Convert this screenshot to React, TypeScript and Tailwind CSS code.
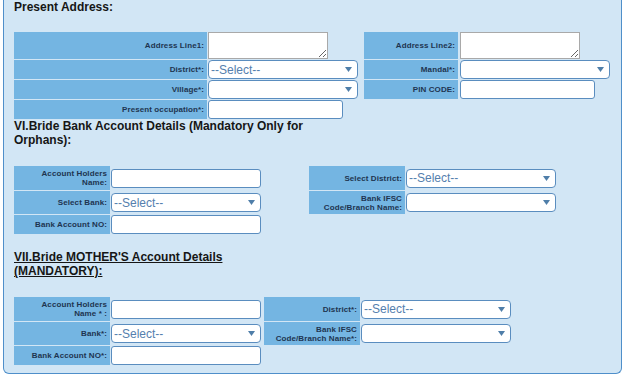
import React from 'react';

function Label({ children, className = '' }: { children: React.ReactNode; className?: string }) {
  return (
    <div
      className={`bg-[#74b5e2] flex items-center justify-end pr-[3px] text-right text-[8px] font-bold leading-[9px] tracking-[0.1px] text-[#1e3450] ${className}`}
    >
      <span>{children}</span>
    </div>
  );
}

function Select({ value = '', className = '' }: { value?: string; className?: string }) {
  return (
    <div
      className={`relative h-[19px] bg-white border border-[#5a8dbf] rounded-[4px] flex items-center pl-[2px] text-[12px] text-[#5580ae] ${className}`}
    >
      {value}
      <svg className="absolute right-[5px] top-[6px]" width="7" height="5" viewBox="0 0 7 5">
        <path d="M0 0H7L3.5 5Z" fill="#4f7ea9" />
      </svg>
    </div>
  );
}

function TextInput({ className = '' }: { className?: string }) {
  return <div className={`h-[19px] bg-white border border-[#5a8dbf] rounded-[3px] ${className}`} />;
}

function Cell({ children, className = '' }: { children?: React.ReactNode; className?: string }) {
  return <div className={`flex items-center ${className}`}>{children}</div>;
}

export default function App() {
  return (
    <div className="bg-white h-[384px] font-['Liberation_Sans',Arial,sans-serif]">
      <div className="ml-[3px] w-[619px] bg-[#d2e6f5] border-x border-b border-[#4f8fca] rounded-b-[6px] pl-[10px] pb-[8px]">
        <h2 className="text-[12px] font-bold leading-[14px] text-[#161616] mb-[18px]">Present Address:</h2>

        {/* Present address table */}
        <div className="grid grid-cols-[193px_155px_94px_153px] grid-rows-[27px_19px_19px_19px] gap-x-px gap-y-px">
          <Label>Address Line1:</Label>
          <Cell>
            <textarea readOnly className="block w-[120px] h-[27px] bg-white border border-[#a9a9a9]" />
          </Cell>
          <Label>Address Line2:</Label>
          <Cell className="pl-px">
            <textarea readOnly className="block w-[120px] h-[27px] bg-white border border-[#a9a9a9]" />
          </Cell>

          <Label>District*:</Label>
          <Cell>
            <Select value="--Select--" className="w-[150px]" />
          </Cell>
          <Label>Mandal*:</Label>
          <Cell className="pl-px">
            <Select className="w-[150px]" />
          </Cell>

          <Label>Village*:</Label>
          <Cell>
            <Select className="w-[150px]" />
          </Cell>
          <Label>PIN CODE:</Label>
          <Cell className="pl-px">
            <TextInput className="w-[135px]" />
          </Cell>

          <Label>Present occupation*:</Label>
          <Cell>
            <TextInput className="w-[135px]" />
          </Cell>
          <div />
          <div />
        </div>

        <h2 className="text-[12px] font-bold leading-[14px] text-[#161616]">
          VI.Bride Bank Account Details (Mandatory Only for
          <br />
          Orphans):
        </h2>

        {/* Bride bank account */}
        <div className="mt-[19px] grid grid-cols-[96px_197px_96px_160px] grid-rows-[24px_23px_19px] gap-x-px gap-y-px">
          <Label>
            Account Holders
            <br />
            Name:
          </Label>
          <Cell>
            <TextInput className="w-[150px]" />
          </Cell>
          <Label>Select District:</Label>
          <Cell>
            <Select value="--Select--" className="w-[150px]" />
          </Cell>

          <Label>Select Bank:</Label>
          <Cell>
            <Select value="--Select--" className="w-[150px]" />
          </Cell>
          <Label>
            Bank IFSC
            <br />
            Code/Branch Name:
          </Label>
          <Cell>
            <Select className="w-[150px]" />
          </Cell>

          <Label>Bank Account NO:</Label>
          <Cell>
            <TextInput className="w-[150px]" />
          </Cell>
          <div />
          <div />
        </div>

        <h2 className="mt-[16px] text-[12px] font-bold leading-[14px] text-[#161616] underline">
          VII.Bride MOTHER'S Account Details
          <br />
          (MANDATORY):
        </h2>

        {/* Mother's account */}
        <div className="mt-[19px] grid grid-cols-[96px_152px_96px_160px] grid-rows-[24px_23px_19px] gap-x-px gap-y-px">
          <Label>
            Account Holders
            <br />
            Name * :
          </Label>
          <Cell>
            <TextInput className="w-[150px]" />
          </Cell>
          <Label>District*:</Label>
          <Cell>
            <Select value="--Select--" className="w-[150px]" />
          </Cell>

          <Label>Bank*:</Label>
          <Cell>
            <Select value="--Select--" className="w-[150px]" />
          </Cell>
          <Label>
            Bank IFSC
            <br />
            Code/Branch Name*:
          </Label>
          <Cell>
            <Select className="w-[150px]" />
          </Cell>

          <Label>Bank Account NO*:</Label>
          <Cell>
            <TextInput className="w-[150px]" />
          </Cell>
          <div />
          <div />
        </div>
      </div>
    </div>
  );
}
